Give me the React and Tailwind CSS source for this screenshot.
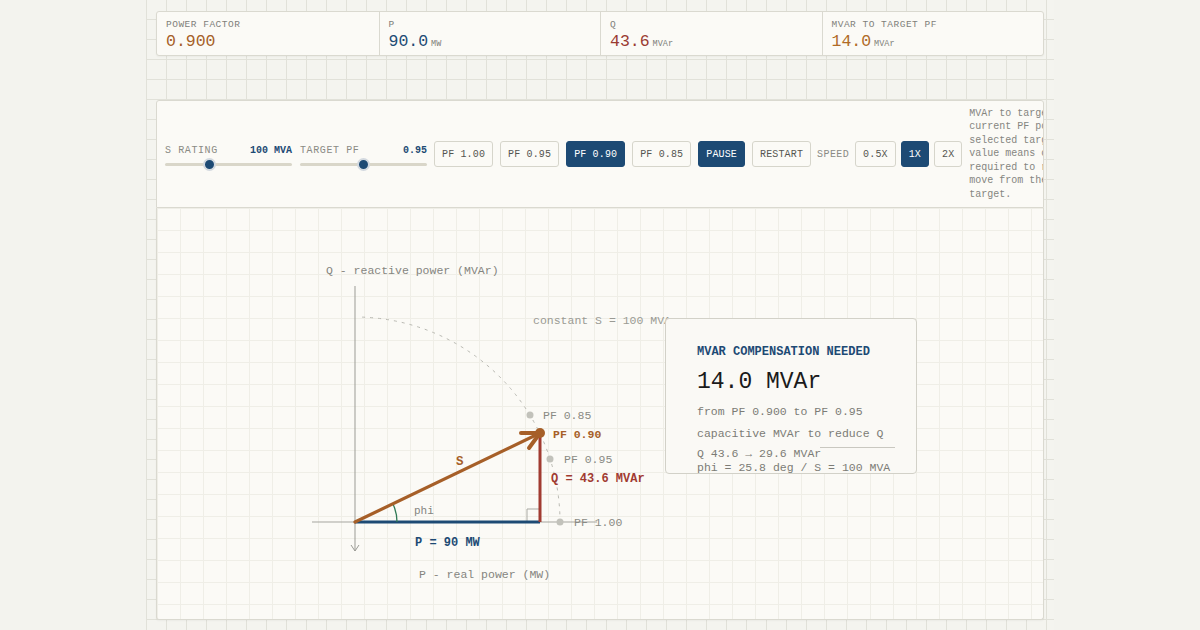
import React from "react";

const mono = "font-['Liberation_Mono','DejaVu_Sans_Mono',monospace]";

const stats = [
  { label: "POWER FACTOR", value: "0.900", unit: "", color: "text-[#a65f28]" },
  { label: "P", value: "90.0", unit: "MW", color: "text-[#1d4a74]" },
  { label: "Q", value: "43.6", unit: "MVAr", color: "text-[#9a3a31]" },
  { label: "MVAR TO TARGET PF", value: "14.0", unit: "MVAr", color: "text-[#b06a26]" },
];

const buttons = [
  { text: "PF 1.00" },
  { text: "PF 0.95" },
  { text: "PF 0.90", active: true },
  { text: "PF 0.85" },
  { text: "PAUSE", active: true },
  { text: "RESTART" },
];

const speeds = [{ text: "0.5X" }, { text: "1X", active: true }, { text: "2X" }];

const helpLines = [
  "MVAr to target is",
  "current PF point to",
  "selected target. A",
  "value means capacitive",
  "required to reduce Q",
  "move from the",
  "target.",
];

function Btn({ text, active }) {
  return (
    <button
      className={`h-[26px] px-[7px] border rounded-[3px] text-[10px] tracking-[0.15px] shrink-0 ${
        active
          ? "bg-[#1d4a74] border-[#1d4a74] text-white"
          : "bg-[#fbfaf6] border-[#d6d5cb] text-[#555550]"
      }`}
    >
      {text}
    </button>
  );
}

function Slider({ label, value, pos }) {
  return (
    <div className="w-[127px] shrink-0 flex flex-col mt-[7px]">
      <div className="flex justify-between items-center h-[12px] text-[10px] tracking-[0.6px]">
        <span className="text-[#8a8a84]">{label}</span>
        <span className="text-[#1d4a74] font-bold tracking-[0px]">{value}</span>
      </div>
      <div className="relative h-[14px] mt-[1px] flex items-center">
        <div className="w-full h-[3px] rounded-full bg-[#d9d6c9]" />
        <div
          className="absolute w-[13px] h-[13px] rounded-full bg-[#1d4a74] border-[2px] border-[#d3d9df]"
          style={{ left: pos - 6 }}
        />
      </div>
    </div>
  );
}

function Chart() {
  const ox = 355;
  const oy = 523;
  const r = 205;
  const a0 = (88 * Math.PI) / 180;
  const sx = ox + r * Math.cos(a0);
  const sy = oy - r * Math.sin(a0);
  const phi = (25.8 * Math.PI) / 180;
  const pr = 42;
  const fontProps = { fontFamily: "'Liberation Mono', 'DejaVu Sans Mono', monospace" };

  return (
    <svg width="886" height="410" viewBox="157 209 886 410" className="block" {...fontProps}>
      {/* axes */}
      <line x1="355" y1="287" x2="355" y2="552" stroke="#9b9b95" strokeWidth="1" />
      <polyline points="351,546 355,552 359,546" fill="none" stroke="#9b9b95" strokeWidth="1" />
      <line x1="312" y1="523" x2="597" y2="523" stroke="#a5a59f" strokeWidth="1" />

      <text x="326" y="275" fontSize="11.5" fill="#85857f">Q - reactive power (MVAr)</text>
      <text x="419" y="579" fontSize="11.5" fill="#85857f">P - real power (MW)</text>

      {/* constant S arc */}
      <path
        d={`M ${sx} ${sy} A ${r} ${r} 0 0 1 ${ox + r} ${oy}`}
        fill="none"
        stroke="#b9b9b2"
        strokeWidth="1"
        strokeDasharray="3 5"
      />
      <text x="533" y="325" fontSize="11.5" fill="#9a9a94">constant S = 100 MVA</text>

      {/* PF points */}
      <circle cx="530" cy="416" r="3.5" fill="#c2c2bb" />
      <text x="543" y="420" fontSize="11.5" fill="#8a8a84">PF 0.85</text>
      <circle cx="550" cy="460" r="3.5" fill="#c2c2bb" />
      <text x="564" y="464" fontSize="11.5" fill="#8a8a84">PF 0.95</text>
      <circle cx="560" cy="523" r="3.5" fill="#c2c2bb" />
      <text x="574" y="527" fontSize="11.5" fill="#8a8a84">PF 1.00</text>

      {/* right angle */}
      <polyline points="527,523 527,510 540,510" fill="none" stroke="#a9a9a3" strokeWidth="1" />

      {/* P and Q */}
      <line x1="355" y1="523" x2="540" y2="523" stroke="#1d4a74" strokeWidth="3" />
      <line x1="540" y1="523" x2="540" y2="434" stroke="#a13b31" strokeWidth="3" />

      {/* phi arc */}
      <path
        d={`M ${ox + pr} ${oy} A ${pr} ${pr} 0 0 0 ${ox + pr * Math.cos(phi)} ${oy - pr * Math.sin(phi)}`}
        fill="none"
        stroke="#2f7a55"
        strokeWidth="1.3"
      />
      <text x="414" y="515" fontSize="11" fill="#85857f">phi</text>

      {/* S vector */}
      <line x1="355" y1="523" x2="538" y2="435" stroke="#a65f28" strokeWidth="3.2" strokeLinecap="round" />
      <line x1="540" y1="434" x2="521" y2="434" stroke="#a65f28" strokeWidth="4" strokeLinecap="round" />
      <line x1="540" y1="434" x2="529" y2="449" stroke="#a65f28" strokeWidth="4" strokeLinecap="round" />
      <circle cx="540" cy="434" r="5" fill="#a65f28" />

      <text x="456" y="466" fontSize="12.5" fontWeight="bold" fill="#a65f28">S</text>
      <text x="553" y="439" fontSize="11.5" fontWeight="bold" fill="#a65f28">PF 0.90</text>
      <text x="551" y="483" fontSize="12" fontWeight="bold" fill="#a13b31">Q = 43.6 MVAr</text>
      <text x="415" y="547" fontSize="12" fontWeight="bold" fill="#1d4a74">P = 90 MW</text>
    </svg>
  );
}

export default function App() {
  return (
    <div className={`min-h-screen bg-[#f3f3ee] flex justify-center ${mono}`}>
      <div className="w-[908px] px-[10px] pt-[11px] pb-[10px] bg-[#f4f4ef] bg-[linear-gradient(to_right,#e1e1d9_1px,transparent_1px),linear-gradient(to_bottom,#e1e1d9_1px,transparent_1px)] bg-[size:20px_20px] bg-[position:0_-1px]">
        {/* stats */}
        <div className="grid grid-cols-4 h-[45px] bg-[#fbfaf6] border border-[#dad9d0] rounded-[3px] shadow-[0_1px_2px_rgba(0,0,0,0.04)]">
          {stats.map((s, i) => (
            <div key={s.label} className={`px-[9px] pt-[7px] ${i > 0 ? "border-l border-[#dad9d0]" : ""}`}>
              <div className="text-[9.5px] leading-[12px] tracking-[0.5px] text-[#80807a]">{s.label}</div>
              <div className="flex items-baseline h-[20px] mt-[1px]">
                <span className={`text-[16.5px] leading-[20px] ${s.color}`}>{s.value}</span>
                {s.unit && <span className="ml-[3px] text-[8.5px] text-[#80807a]">{s.unit}</span>}
              </div>
            </div>
          ))}
        </div>

        {/* controls */}
        <div className="mt-[44px] h-[108px] flex items-center gap-[7px] pl-[8px] bg-[#fbfaf6] border border-[#dad9d0] rounded-t-[3px] overflow-hidden">
          <Slider label="S RATING" value="100 MVA" pos={44} />
          <div className="ml-[1px]">
            <Slider label="TARGET PF" value="0.95" pos={63} />
          </div>
          {buttons.map((b) => (
            <Btn key={b.text} {...b} />
          ))}
          <span className="-mx-[1px] text-[10px] tracking-[0.4px] text-[#8a8a84] shrink-0">SPEED</span>
          <div className="flex gap-[5px] shrink-0">
            {speeds.map((b) => (
              <Btn key={b.text} {...b} />
            ))}
          </div>
          <div className="shrink-0 w-[140px] text-[10px] leading-[13.4px] text-[#85857f]">
            {helpLines.map((l) => (
              <div key={l} className="whitespace-nowrap">
                {l}
              </div>
            ))}
          </div>
        </div>

        {/* chart */}
        <div className="relative h-[412px] bg-[#fbfaf6] bg-[linear-gradient(to_right,#efeee7_1px,transparent_1px),linear-gradient(to_bottom,#efeee7_1px,transparent_1px)] bg-[size:23px_22px] border border-t-0 border-[#dad9d0] rounded-b-[3px] overflow-hidden shadow-[0_1px_2px_rgba(0,0,0,0.04)]">
          <Chart />

          <div className="absolute left-[508px] top-[110px] w-[252px] h-[156px] bg-[#faf9f5] border border-[#d2d1c8] rounded-[4px] px-[31px] pt-[26px]">
            <div className="text-[12px] leading-[14px] font-bold text-[#1d4a74]">MVAR COMPENSATION NEEDED</div>
            <div className="mt-[9px] text-[23px] leading-[28px] text-[#1b1b1b]">14.0 MVAr</div>
            <div className="mt-[8px] text-[11.5px] leading-[16px] text-[#7c7c76] whitespace-nowrap">from PF 0.900 to PF 0.95</div>
            <div className="mt-[6px] text-[11.5px] leading-[16px] text-[#7c7c76] whitespace-nowrap">capacitive MVAr to reduce Q</div>
            <div className="relative mt-[5px] text-[11.5px] leading-[14px] text-[#7c7c76] whitespace-nowrap">
              <div>Q 43.6 → 29.6 MVAr</div>
              <div>phi = 25.8 deg / S = 100 MVA</div>
              <div className="absolute left-[123px] top-[0px] w-[75px] h-[1px] bg-[#c9c8c0]" />
            </div>
          </div>
        </div>
      </div>
    </div>
  );
}
